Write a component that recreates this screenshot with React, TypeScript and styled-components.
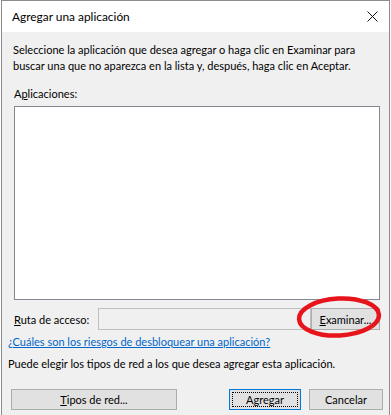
import React from 'react';
import styled, { createGlobalStyle } from 'styled-components';

const GlobalStyle = createGlobalStyle`
  html, body {
    margin: 0;
    padding: 0;
    background: #ffffff;
  }
  body {
    font-family: Lato, 'Liberation Sans', sans-serif;
    font-size: 11px;
    color: #000;
  }
`;

const Page = styled.div`
  width: 391px;
  height: 415px;
  overflow: hidden;
  position: relative;
`;

const Window = styled.div`
  margin-left: 1px;
  width: 387px;
  min-height: 430px;
  border: 1px solid #8c8c8c;
  border-bottom: none;
  background: #f0f0f0;
  display: flex;
  flex-direction: column;
`;

const TitleBar = styled.div`
  flex-shrink: 0;
  height: 31px;
  background: #ffffff;
  display: flex;
  align-items: center;
  justify-content: space-between;
  padding-left: 10px;
  padding-right: 10px;
  font-size: 11.9px;
`;

const CloseButton = styled.div`
  width: 12px;
  height: 12px;
  display: flex;
  align-items: center;
  justify-content: center;
  margin-right: 1px;
`;

const Body = styled.div`
  display: flex;
  flex-direction: column;
  padding: 10px 9px 0 6px;
  white-space: nowrap;
`;

const Description = styled.p`
  margin: 0 0 0 5px;
  line-height: 16px;
`;

const Label = styled.div`
  margin: 12px 0 0 6px;
  line-height: 16px;
`;

const ListBox = styled.div`
  margin: 4px 0 0 6px;
  height: 192px;
  background: #ffffff;
  border: 1px solid #828790;
`;

const PathRow = styled.div`
  display: flex;
  align-items: center;
  margin: 8px 0 0 6px;
`;

const PathLabel = styled.span`
  flex-shrink: 0;
  width: 84px;
`;

const PathInput = styled.div`
  flex: 1;
  height: 20px;
  background: #f0f0f0;
  border: 1px solid #bfbfbf;
`;

const Button = styled.button<{ $default?: boolean; $width: number }>`
  font-family: inherit;
  font-size: 11px;
  color: #000;
  flex-shrink: 0;
  width: ${({ $width }) => $width}px;
  height: 21px;
  padding: 0;
  background: #e1e1e1;
  border: 1px solid ${({ $default }) => ($default ? '#0078d7' : '#adadad')};
  position: relative;
  display: flex;
  align-items: center;
  justify-content: center;
  box-sizing: border-box;
`;

const BrowseButton = styled(Button)`
  height: 22px;
`;

const FocusRing = styled.span`
  position: absolute;
  inset: 2px;
  border: 1px dotted #000;
`;

const Link = styled.a`
  align-self: flex-start;
  margin-top: 4px;
  color: #0066cc;
  text-decoration: underline;
  line-height: 16px;
  cursor: pointer;
`;

const Note = styled.div`
  margin-top: 6px;
  line-height: 16px;
`;

const ButtonRow = styled.div`
  display: flex;
  align-items: center;
  margin: 17px -3px 0 3px;
  gap: 8px;
`;

const Spacer = styled.div`
  flex: 1;
`;

const Annotation = styled.svg`
  position: absolute;
  left: 294px;
  top: 294px;
  overflow: visible;
  pointer-events: none;
`;

const Acc = styled.span`
  text-decoration: underline;
`;

export default function App() {
  return (
    <Page>
      <GlobalStyle />
      <Window>
        <TitleBar>
          <span>Agregar una aplicación</span>
          <CloseButton>
            <svg width="11" height="11" viewBox="0 0 11 11">
              <path d="M0.5 0.5 L10.5 10.5 M10.5 0.5 L0.5 10.5" stroke="#111" strokeWidth="1" />
            </svg>
          </CloseButton>
        </TitleBar>
        <Body>
          <Description>
            Seleccione la aplicación que desea agregar o haga clic en Examinar para
            <br />
            buscar una que no aparezca en la lista y, después, haga clic en Aceptar.
          </Description>
          <Label>
            A<Acc>p</Acc>licaciones:
          </Label>
          <ListBox />
          <PathRow>
            <PathLabel>
              <Acc>R</Acc>uta de acceso:
            </PathLabel>
            <PathInput />
            <BrowseButton $width={69}>
              <span>
                <Acc>E</Acc>xaminar...
              </span>
            </BrowseButton>
          </PathRow>
          <Link>¿Cuáles son los riesgos de desbloquear una aplicación?</Link>
          <Note>Puede elegir los tipos de red a los que desea agregar esta aplicación.</Note>
          <ButtonRow>
            <Button $width={166}>
              <span>
                <Acc>T</Acc>ipos de red...
              </span>
            </Button>
            <Spacer />
            <Button $default $width={72}>
              <FocusRing />
              Agregar
            </Button>
            <Button $width={74}>Cancelar</Button>
          </ButtonRow>
        </Body>
      </Window>
      <Annotation width="90" height="48" viewBox="0 0 90 48">
        <ellipse cx="45" cy="23" rx="40" ry="18.5" fill="none" stroke="#e8141b" strokeWidth="4.5" transform="rotate(-3 45 23)" />
      </Annotation>
    </Page>
  );
}
